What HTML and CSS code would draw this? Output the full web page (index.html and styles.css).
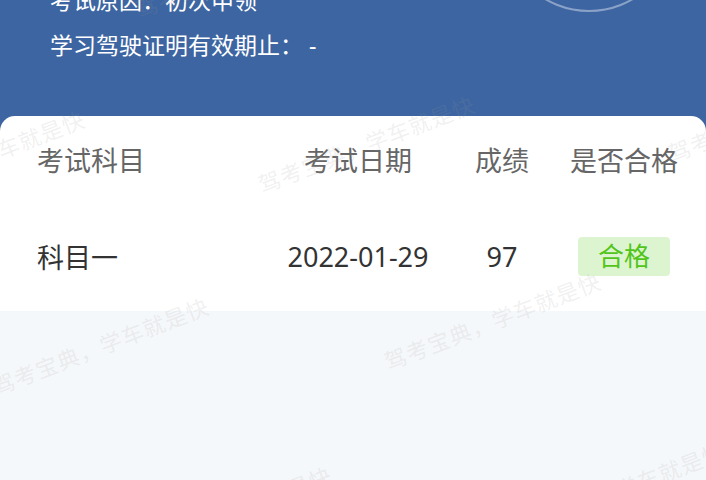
FILE: index.html
```html
<!DOCTYPE html>
<html lang="zh-CN">
<head>
  <meta charset="UTF-8">
  <title>考试记录</title>
  <link rel="stylesheet" href="styles.css">
</head>
<body>
  <div class="page">
    <header class="info">
      <p class="info-line">考试原因：初次申领</p>
      <p class="info-line">学习驾驶证明有效期止： -</p>
      <div class="avatar-ring"></div>
    </header>

    <section class="card">
      <div class="table-row table-head">
        <span class="cell cell-name">考试科目</span>
        <span class="cell">考试日期</span>
        <span class="cell">成绩</span>
        <span class="cell">是否合格</span>
      </div>
      <div class="table-row table-body">
        <span class="cell cell-name">科目一</span>
        <span class="cell">2022-01-29</span>
        <span class="cell">97</span>
        <span class="cell"><span class="badge">合格</span></span>
      </div>
    </section>
  </div>

  <div class="watermark">
    <span class="wm wm-1">驾考宝典，学车就是快</span>
    <span class="wm wm-2">驾考宝典，学车就是快</span>
    <span class="wm wm-3">驾考宝典，学车就是快</span>
    <span class="wm wm-4">驾考宝典，学车就是快</span>
    <span class="wm wm-5">驾考宝典，学车就是快</span>
    <span class="wm wm-6">驾考宝典，学车就是快</span>
    <span class="wm wm-7">驾考宝典，学车就是快</span>
    <span class="wm wm-8">驾考宝典，学车就是快</span>
  </div>
</body>
</html>
```

FILE: styles.css
```css
body {
  margin: 0;
  height: 480px;
  overflow: hidden;
  background: #f5f8fa;
  font-family: "Noto Sans", "Noto Sans CJK SC", sans-serif;
  position: relative;
}

.page {
  display: flex;
  flex-direction: column;
}

.info {
  position: relative;
  margin-top: -22px;
  padding: 0 0 64px 50px;
  background: #3d65a2;
  color: #fff;
}

.info-line {
  margin: 0;
  font-size: 23px;
  line-height: 45px;
}

.avatar-ring {
  position: absolute;
  left: 502px;
  top: -140px;
  width: 174px;
  height: 174px;
  border: 2.5px solid rgba(255, 255, 255, 0.4);
  border-radius: 50%;
  box-sizing: border-box;
}

.card {
  position: relative;
  margin-top: -16px;
  background: #fff;
  border-radius: 15px 15px 0 0;
  padding: 0 34px 0 37px;
}

.table-row {
  display: grid;
  grid-template-columns: 251px 140px 148px 96px;
  align-items: center;
  justify-items: center;
  font-size: 27px;
  white-space: nowrap;
}

.table-head {
  height: 86px;
  color: #666;
}

.table-body {
  height: 109px;
  color: #333;
}

.cell-name {
  justify-self: start;
}

.badge {
  display: inline-block;
  padding: 0 20px;
  font-size: 26px;
  line-height: 39px;
  border-radius: 4px;
  background: #dcf5d0;
  color: #52c41a;
}

.watermark {
  position: absolute;
  inset: 0;
  overflow: hidden;
  pointer-events: none;
}

.wm {
  position: absolute;
  transform: translate(-50%, -50%) rotate(-21deg);
  font-size: 22px;
  letter-spacing: 1px;
  color: rgba(150, 150, 150, 0.14);
  white-space: nowrap;
}

.wm-1 { left: -24px; top: 158px; }
.wm-2 { left: 366px; top: 143px; }
.wm-3 { left: 776px; top: 112px; }
.wm-4 { left: 100px; top: 345px; }
.wm-5 { left: 492px; top: 320px; }
.wm-6 { left: 223px; top: 514px; }
.wm-7 { left: 616px; top: 490px; }
.wm-8 { left: 243px; top: -32px; }
```
